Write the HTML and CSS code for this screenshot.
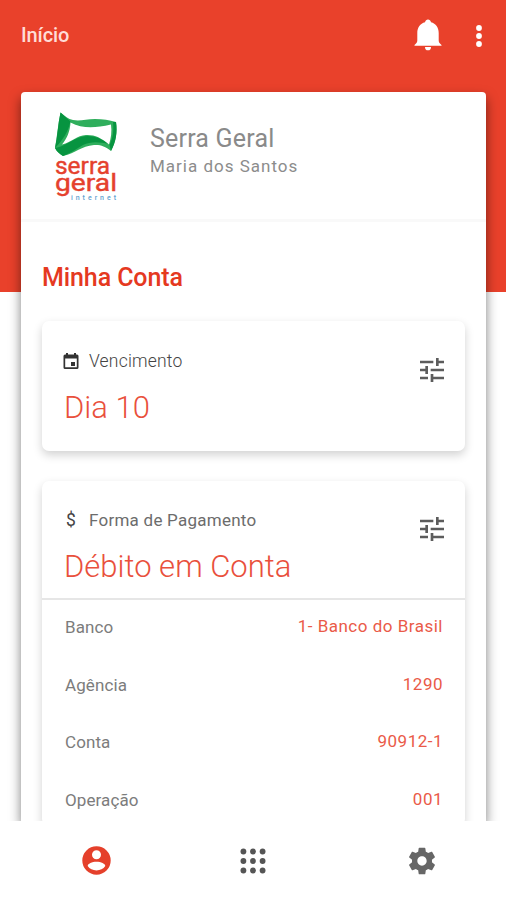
FILE: index.html
```html
<!DOCTYPE html>
<html lang="pt-BR">

<head>
    <meta charset="UTF-8">
    <meta name="viewport" content="width=device-width, initial-scale=1.0">
    <title>Serra Geral - Minha Conta</title>
    <link rel="stylesheet" href="styles.css">
</head>

<body>
    <div class="app">
        <header class="topbar">
            <h1 class="topbar-title">Início</h1>
            <div class="topbar-actions">
                <svg class="icon-bell" viewBox="0 0 28 32">
                    <path d="M14 .5c-1.500 0-2.500 1-3 2.700C6.200 4.500 3.300 8.500 3.300 14v7.500c0 2-1.300 3.400-2.800 4.400v.800h27v-.8c-1.500-1-2.800-2.400-2.800-4.400V14c0-5.500-2.900-9.500-7.700-10.800-.5-1.700-1.500-2.700-3-2.700zM11 27.900a3 3.400 0 0 0 6 0z" />
                </svg>
                <svg class="icon-more" viewBox="0 0 6 22">
                    <circle cx="3" cy="3" r="2.900" />
                    <circle cx="3" cy="11" r="2.900" />
                    <circle cx="3" cy="19" r="2.900" />
                </svg>
            </div>
        </header>

        <main class="panel">
            <div class="profile">
                <svg class="logo" viewBox="0 0 68 90">
                    <path class="flag" d="M6.500.5C11 4 14 7 19 8c7 1.500 13-1 22-1 8 0 14 1 21 3 1.500 10 0 20-5 29-6-5-11-6.500-17-6-13 1-18 8-31 11-3-2-6-4-8-8C3 25 4 12 6.500.5z" />
                    <path class="flag-dark" d="M6.500.5l10 9C14 20 9 28 1 36 3.500 25 4 12 6.500.5zM59 10l3 0c1.500 10 0 20-5 29l-1.500-6C59 26 60 18 59 10zM1 36c9-1 16-8 26-11 9-2.500 19 0 28 7-9-2-18-3-26 1-7 4-12 8-20 11-3-2-6-4-8-8z" />
                    <path class="flag-hole" d="M16.500 10.500C29 17 41 16 57 12.500c1 7 0 14-2 20-8-7-15-10-23-9.500-9 .5-14 7-24 9.500 5-6 8-13 8.500-22z" />
                    <text class="logo-name" x="1" y="62" textLength="55" lengthAdjust="spacingAndGlyphs">serra</text>
                    <text class="logo-name" x="1" y="78.500" textLength="62" lengthAdjust="spacingAndGlyphs">geral</text>
                    <text class="logo-sub" x="17" y="88" textLength="45" lengthAdjust="spacing">internet</text>
                </svg>
                <div class="profile-text">
                    <div class="company">Serra Geral</div>
                    <div class="customer">Maria dos Santos</div>
                </div>
            </div>

            <div class="content">
                <h2 class="section-title">Minha Conta</h2>

                <section class="card">
                    <div class="card-head">
                        <div>
                            <div class="card-label">
                                <svg class="icon-label" viewBox="0 0 16 16">
                                    <path fill-rule="evenodd" d="M2 1.500h1V0h2v1.500h6V0h2v1.500h1A1.500 1.500 0 0 1 15.500 3v11.500A1.500 1.500 0 0 1 14 16H2a1.500 1.500 0 0 1-1.500-1.500V3A1.500 1.500 0 0 1 2 1.500zM2.200 5.500v8.800h11.600V5.500zM8 9h4v4H8z" />
                                </svg>
                                <span>Vencimento</span>
                            </div>
                            <div class="card-value">Dia 10</div>
                        </div>
                        <svg class="icon-tune" viewBox="0 0 24 24">
                            <path d="M3 17v2h6v-2H3zM3 5v2h10V5H3zm10 16v-2h8v-2h-8v-2h-2v6h2zM7 9v2H3v2h4v2h2V9H7zm14 4v-2H11v2h10zm-6-4h2V7h4V5h-4V3h-2v6z" />
                        </svg>
                    </div>
                </section>

                <section class="card payment">
                    <div class="card-head">
                        <div>
                            <div class="card-label">
                                <span class="icon-label dollar">$</span>
                                <span class="payment-label">Forma de Pagamento</span>
                            </div>
                            <div class="card-value">Débito em Conta</div>
                        </div>
                        <svg class="icon-tune" viewBox="0 0 24 24">
                            <path d="M3 17v2h6v-2H3zM3 5v2h10V5H3zm10 16v-2h8v-2h-8v-2h-2v6h2zM7 9v2H3v2h4v2h2V9H7zm14 4v-2H11v2h10zm-6-4h2V7h4V5h-4V3h-2v6z" />
                        </svg>
                    </div>
                    <dl class="details">
                        <div class="row">
                            <dt>Banco</dt>
                            <dd>1- Banco do Brasil</dd>
                        </div>
                        <div class="row">
                            <dt>Agência</dt>
                            <dd>1290</dd>
                        </div>
                        <div class="row">
                            <dt>Conta</dt>
                            <dd>90912-1</dd>
                        </div>
                        <div class="row">
                            <dt>Operação</dt>
                            <dd>001</dd>
                        </div>
                    </dl>
                </section>
            </div>
        </main>

        <nav class="tabs">
            <a class="tab active" href="#">
                <svg width="29" height="29" viewBox="0 0 29 29">
                    <path fill-rule="evenodd" d="M14.500.3a14.200 14.200 0 1 1 0 28.400 14.200 14.200 0 0 1 0-28.400zm0 4a4.500 4.500 0 1 0 0 9 4.500 4.500 0 0 0 0-9zm0 11.400c-4.500 0-8.800 1.900-8.800 4.300 1.900 2.900 5.200 4.400 8.800 4.400s6.900-1.500 8.800-4.400c0-2.400-4.300-4.300-8.800-4.300z" />
                </svg>
            </a>
            <a class="tab" href="#">
                <svg width="26" height="26" viewBox="0 0 26 26">
                    <circle cx="3.400" cy="3.500" r="2.900" />
                    <circle cx="13" cy="3.500" r="2.900" />
                    <circle cx="22.600" cy="3.500" r="2.900" />
                    <circle cx="3.400" cy="13" r="2.900" />
                    <circle cx="13" cy="13" r="2.900" />
                    <circle cx="22.600" cy="13" r="2.900" />
                    <circle cx="3.400" cy="22.500" r="2.900" />
                    <circle cx="13" cy="22.500" r="2.900" />
                    <circle cx="22.600" cy="22.500" r="2.900" />
                </svg>
            </a>
            <a class="tab settings" href="#">
                <svg width="32" height="32" viewBox="0 0 24 24">
                    <path d="M19.430 12.980c.04-.32.070-.64.070-.98s-.03-.66-.07-.98l2.110-1.650c.19-.15.240-.42.120-.64l-2-3.460c-.12-.22-.39-.3-.61-.22l-2.490 1c-.52-.4-1.080-.73-1.690-.98l-.38-2.650C14.460 2.180 14.250 2 14 2h-4c-.25 0-.46.180-.49.420l-.38 2.650c-.61.250-1.170.590-1.690.980l-2.490-1c-.23-.09-.49 0-.61.220l-2 3.460c-.13.220-.07.490.120.640l2.110 1.650c-.04.320-.07.650-.07.980s.030.660.070.980l-2.110 1.650c-.19.150-.24.420-.12.640l2 3.460c.12.220.390.300.610.220l2.490-1c.52.400 1.080.730 1.690.980l.38 2.650c.03.240.240.420.490.420h4c.25 0 .46-.18.490-.42l.38-2.650c.61-.25 1.170-.59 1.690-.98l2.490 1c.23.090.490 0 .61-.22l2-3.460c.12-.22.070-.49-.12-.64l-2.110-1.650zM12 15.500c-1.930 0-3.500-1.570-3.500-3.500s1.570-3.500 3.500-3.500 3.500 1.570 3.500 3.500-1.570 3.500-3.500 3.500z" />
                </svg>
            </a>
        </nav>
    </div>
</body>

</html>
```

FILE: styles.css
```css
* {
    box-sizing: border-box;
}

body {
    margin: 0;
    font-family: Roboto, "Liberation Sans", sans-serif;
    background-color: #fff;
}

.app {
    display: flex;
    flex-direction: column;
    height: 900px;
    overflow: hidden;
    /* faixa vermelha no topo */
    background: linear-gradient(#e9412b 292px, #fff 292px);
}

.topbar {
    display: flex;
    flex: none;
    justify-content: space-between;
    height: 92px;
    padding: 19px 24px 0 21px;
}

.topbar-title {
    margin: 0;
    font-size: 20px;
    font-weight: 500;
    line-height: 33px;
    letter-spacing: -0.1px;
    color: #ffdcd6;
}

.topbar-actions {
    display: flex;
    align-items: center;
    gap: 34px;
    height: 32px;
    fill: #fff;
}

.icon-bell {
    width: 28px;
    height: 32px;
}

.icon-more {
    width: 6px;
    height: 22px;
    margin-top: 1px;
}

.panel {
    flex: 1;
    min-height: 0;
    margin: 0 20px 0 21px;
    background-color: #fff;
    border-radius: 4px 4px 0 0;
    box-shadow: 0 6px 12px rgba(0, 0, 0, 0.5);
}

.profile {
    display: flex;
    height: 130px;
    padding: 20px 0 0 33px;
    border-bottom: 3px solid #f9f9f9;
}

.logo {
    width: 68px;
    height: 90px;
}

.flag {
    fill: #2fae5c;
}

.flag-dark {
    fill: #079440;
}

.flag-hole {
    fill: #fff;
}

.logo-name {
    font-family: Roboto, sans-serif;
    font-size: 24px;
    font-weight: 400;
    fill: #e5412d;
    stroke: #e5412d;
    stroke-width: 0.4px;
}

.logo-sub {
    font-family: Roboto, sans-serif;
    font-size: 7px;
    font-weight: 500;
    fill: #5f9fd0;
}

.profile-text {
    margin-left: 28px;
    padding-top: 11px;
}

.company {
    font-size: 25px;
    line-height: 31px;
    letter-spacing: 0.2px;
    color: #8a8a8a;
}

.customer {
    font-size: 17px;
    line-height: 25px;
    letter-spacing: 1px;
    color: #8c8c8c;
}

.content {
    padding: 0 21px;
}

.section-title {
    margin: 0;
    padding-top: 41px;
    height: 99px;
    font-size: 25px;
    font-weight: 500;
    line-height: 30px;
    letter-spacing: -0.1px;
    color: #e5391f;
}

.card {
    height: 130px;
    background-color: #fff;
    border-radius: 7px;
    box-shadow: 0 4px 10px rgba(0, 0, 0, 0.18);
}

.payment {
    height: 345px;
    margin-top: 30px;
}

.card-head {
    display: flex;
    justify-content: space-between;
    height: 117px;
    padding: 28px 17px 0 21px;
}

.card-label {
    display: flex;
    align-items: center;
    height: 24px;
    font-size: 17.500px;
    font-weight: 300;
    line-height: 24px;
    letter-spacing: 0.2px;
    color: #444;
}

.icon-label {
    width: 16px;
    height: 16px;
    margin-right: 10px;
    fill: #333;
}

.dollar {
    line-height: 16px;
    text-align: center;
    font-weight: 400;
    color: #444;
}

.payment .card-label {
    height: 22px;
}

.payment-label {
    font-size: 17px;
    font-weight: 400;
    letter-spacing: 0.25px;
    color: #6c6c6c;
}

.card-value {
    margin: 16px 0 0 1px;
    font-size: 31px;
    font-weight: 300;
    line-height: 38px;
    color: #e9503c;
}

.payment .card-value {
    margin-top: 17px;
}

.icon-tune {
    width: 32px;
    height: 32px;
    margin-top: 5px;
    fill: #5c5c5c;
}

.payment .icon-tune {
    margin-top: 4px;
}

.details {
    margin: 0;
    border-top: 2px solid #e6e6e6;
}

.row {
    display: flex;
    justify-content: space-between;
    height: 57.700px;
    padding: 15px 22px 0 23px;
    font-size: 17px;
    line-height: 24px;
    letter-spacing: 0.5px;
}

.row dt {
    letter-spacing: 0.1px;
    color: #7c7c7c;
}

.row dd {
    margin: -1px 0 0;
    color: #ea5a48;
}

.tabs {
    display: flex;
    flex: none;
    height: 79px;
    padding-left: 1px;
    z-index: 1;
    background-color: #fff;
}

.tab {
    display: flex;
    flex: 1 1 0;
    align-items: center;
    justify-content: center;
    min-width: 0;
    fill: #555;
}

.tab.active svg {
    margin-left: 22px;
    fill: #e5402b;
}

.settings {
    fill: #666;
}
```
